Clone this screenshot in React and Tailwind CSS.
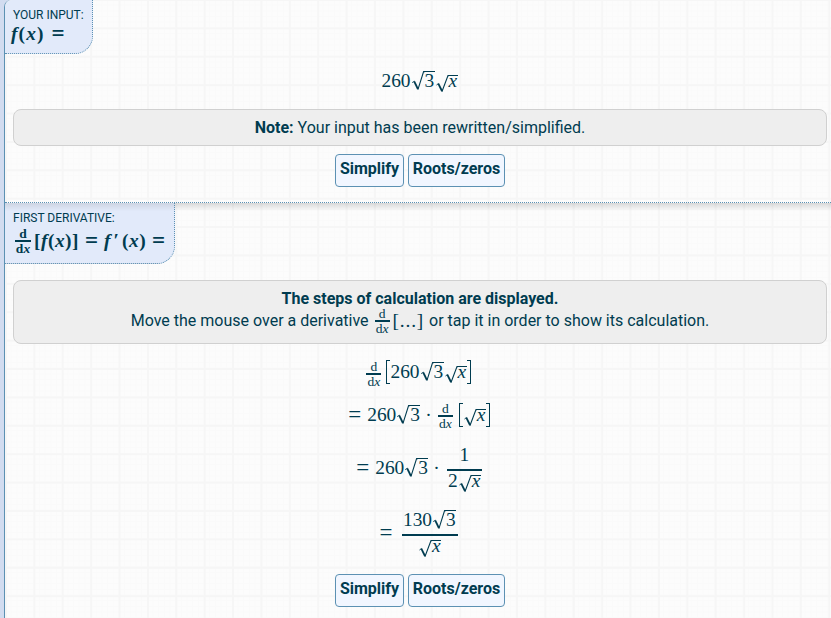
function Serif({ children, className = '' }) {
  return <span className={`block whitespace-pre font-['Liberation_Serif','Times_New_Roman',serif] text-[19.4px] leading-[22px] ${className}`}>{children}</span>;
}

function Equals({ className = '' }) {
  return <span className={`block w-[13px] font-['Liberation_Serif','Times_New_Roman',serif] text-[23px] leading-[22px] ${className}`}>=</span>;
}

function RootThree() {
  return (
    <span className="ml-[1px] flex h-[22px] items-start">
      <svg className="h-[22px] w-[13px]" viewBox="0 0 13 22" fill="none" stroke="currentColor">
        <path d="M0.2 12.6 L2.5 11.2" strokeWidth="0.9" />
        <path d="M2.2 11.4 L5.9 19" strokeWidth="1.8" />
        <path d="M5.9 19.6 L11.6 1.6 H13" strokeWidth="1.1" />
      </svg>
      <span className="mt-[1px] block h-[21px] w-[10px] border-t-[1.5px] border-current">
        <Serif className="-mt-[2px]">3</Serif>
      </span>
    </span>
  );
}

function RootX() {
  return (
    <span className="ml-[1px] flex h-[22px] items-start">
      <svg className="h-[22px] w-[13px]" viewBox="0 0 13 22" fill="none" stroke="currentColor">
        <path d="M0.5 15 L2.6 13.4" strokeWidth="0.9" />
        <path d="M2.3 13.6 L6 21" strokeWidth="1.8" />
        <path d="M5.9 21.8 L12 5.6 H13" strokeWidth="1.1" />
      </svg>
      <span className="mt-[5px] block h-[17px] w-[9px] border-t-[1.5px] border-current">
        <Serif className="-mt-[6px] italic">x</Serif>
      </span>
    </span>
  );
}

function DDx({ className = '', bold = false }) {
  return (
    <span className={`flex w-[15px] flex-col items-center font-['Liberation_Serif','Times_New_Roman',serif] text-[13.5px] leading-[13px] ${bold ? 'font-bold' : ''} ${className}`}>
      <span className="block h-[13px]">d</span>
      <span className="block h-[2px] w-full bg-current" />
      <span className="block h-[13px]">d<i>x</i></span>
    </span>
  );
}

function Bracket({ right = false, className = '' }) {
  return <span className={`block h-[24px] w-[4px] border-y border-current ${right ? 'border-r-[1.5px]' : 'border-l-[1.5px]'} ${className}`} />;
}

function Buttons({ className = '' }) {
  const cls = 'h-[33px] rounded-[4px] border border-[#5c91b3] bg-[#f1f6ff] pb-[3px] text-center text-[16px] font-bold leading-[28px]';
  return (
    <div className={`flex justify-center gap-[4px] pl-[4px] ${className}`}>
      <button className={`w-[69px] ${cls}`}>Simplify</button>
      <button className={`w-[97px] ${cls}`}>Roots/zeros</button>
    </div>
  );
}

const grid = "bg-[#fcfcfc] bg-[linear-gradient(90deg,#f6f6f6_2px,transparent_2px),linear-gradient(#f6f6f6_2px,transparent_2px),linear-gradient(90deg,#fafafa_1px,transparent_1px),linear-gradient(#fafafa_1px,transparent_1px)] bg-[size:28.4px_28.4px,28.4px_28.4px,5.68px_5.68px,5.68px_5.68px]";

export default function App() {
  return (
    <div className="h-[618px] w-[831px] overflow-hidden bg-[#d2dcf0] pl-[4px] font-[Roboto,sans-serif] text-[16px] text-[#003c50]">
      <main className={`h-[618px] rounded-tl-[7px] border-l border-[#5c91b3] bg-[position:0_-1px,0_-1px,0_-1px,0_-1px] ${grid}`}>
        <section className="h-[203px] overflow-hidden rounded-tl-[7px] border-b border-dotted border-[#5c91b3]">
          <header className="h-[54px] w-[88px] rounded-br-[18px] border-r border-b border-dotted border-[#5c91b3] bg-[#e2eafa] pt-[8px] pl-[8px]">
            <h2 className="whitespace-nowrap text-[12px] leading-[14px]">YOUR INPUT:</h2>
            <div className="-ml-[2px] mt-[1px] flex font-bold">
              <Serif className="tracking-[1.1px]"><i>f</i>(<i>x</i>)</Serif><Equals className="ml-[7px]" />
            </div>
          </header>
          <div className="mt-[16px] flex h-[22px] justify-center pl-[3px]">
            <Serif>260</Serif><RootThree /><RootX />
          </div>
          <div className="mx-[8px] mt-[17px] mr-[4px] h-[37px] rounded-[8px] border border-[#d0d0d0] bg-[#eee] text-center leading-[35px]">
            <b>Note:</b> Your input has been rewritten/simplified.
          </div>
          <Buttons className="mt-[8px]" />
        </section>
        <section className="bg-[linear-gradient(#00000024,transparent_8px)] bg-no-repeat">
          <header className="h-[61px] w-[170px] rounded-br-[18px] border-r border-b border-dotted border-[#5c91b3] bg-[#e2eafa] bg-[linear-gradient(#00000018,transparent_8px)] pt-[8px] pl-[8px]">
            <h2 className="whitespace-nowrap text-[12px] leading-[14px]">FIRST DERIVATIVE:</h2>
            <div className="mt-[2px] flex items-center pl-[2px] font-bold">
              <DDx bold className="w-[16px]" />
              <Serif className="ml-[3px] tracking-[0.5px]">[<i>f</i>(<i>x</i>)]</Serif>
              <Equals className="ml-[6px]" />
              <Serif className="ml-[6px]"><i>f</i></Serif>
              <Serif className="ml-[3px]">′</Serif>
              <Serif className="ml-[3px] tracking-[0.5px]">(<i>x</i>)</Serif>
              <Equals className="ml-[6px]" />
            </div>
          </header>
          <div className="mt-[16px] mr-[4px] ml-[8px] h-[64px] rounded-[8px] border border-[#d0d0d0] bg-[#eee] pt-[10px] text-center">
            <div className="h-[16px] leading-[16px]"><b>The steps of calculation are displayed.</b></div>
            <div className="flex h-[28px] items-center justify-center whitespace-pre leading-[22px]">
              <span>Move the mouse over a derivative </span>
              <DDx className="ml-[2px]" />
              <Serif className="mr-[1px] ml-[3px] tracking-[0.8px]">[...]</Serif>
              <span> or tap it in order to show its calculation.</span>
            </div>
          </div>
          <div className="mt-[13px] flex h-[30px] items-center justify-center pl-[1px]">
            <DDx className="mt-[3px]" /><Bracket className="ml-[5px]" />
            <Serif>260</Serif><RootThree /><RootX /><Bracket right />
          </div>
          <div className="mt-[13px] flex h-[30px] items-center justify-center pl-[2px]">
            <Equals /><Serif className="ml-[6px]">260</Serif><RootThree />
            <Serif className="ml-[5px]">·</Serif><DDx className="mt-[2px] ml-[6px]" />
            <Bracket className="ml-[6px]" /><RootX /><Bracket right />
          </div>
          <div className="mt-[13px] flex h-[50px] items-center justify-center pl-[2px]">
            <Equals /><Serif className="ml-[6px]">260</Serif><RootThree /><Serif className="ml-[5px]">·</Serif>
            <div className="mt-[1px] ml-[7px] flex w-[35px] flex-col items-center self-start">
              <Serif>1</Serif>
              <span className="mt-[3px] -mb-[1px] h-[2px] w-full bg-current" />
              <div className="flex"><Serif>2</Serif><RootX /></div>
            </div>
          </div>
          <div className="mt-[15px] flex h-[50px] items-center justify-center pl-[1px]">
            <Equals />
            <div className="mt-[1px] ml-[9px] flex w-[56px] flex-col items-center self-start">
              <div className="flex"><Serif>130</Serif><RootThree /></div>
              <span className="mt-[3px] -mb-[1px] h-[2px] w-full bg-current" />
              <RootX />
            </div>
          </div>
          <Buttons className="mt-[16px]" />
        </section>
      </main>
    </div>
  );
}
